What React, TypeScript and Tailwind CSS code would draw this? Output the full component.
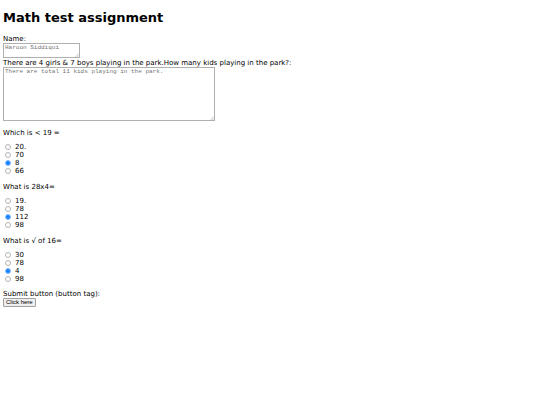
import { useState, type TextareaHTMLAttributes } from 'react';
import { clsx } from 'clsx';

interface Question {
  id: string;
  text: string;
  options: string[];
  answer: string;
}

const questions: Question[] = [
  { id: 'compare', text: 'Which is < 19 =', options: ['20.', '70', '8', '66'], answer: '8' },
  { id: 'multiply', text: 'What is 28x4=', options: ['19.', '78', '112', '98'], answer: '112' },
  { id: 'root', text: 'What is √ of 16=', options: ['30', '78', '4', '98'], answer: '4' },
];

function TextArea({ className, ...props }: TextareaHTMLAttributes<HTMLTextAreaElement>) {
  return (
    <div className="relative w-fit">
      <textarea
        className={clsx(
          "block resize-none border border-[#b0b0b0] bg-white px-px font-['Liberation_Mono',monospace] text-[6px] leading-[7px] placeholder:text-[#757575]",
          className,
        )}
        {...props}
      />
      <svg
        viewBox="0 0 4 4"
        className="pointer-events-none absolute right-px bottom-px h-[4px] w-[4px]"
        stroke="#999"
        strokeWidth="0.5"
        aria-hidden="true"
      >
        <path d="M0.5 4 4 0.5M2.3 4 4 2.3" />
      </svg>
    </div>
  );
}

function RadioQuestion({ question }: { question: Question }) {
  const [value, setValue] = useState(question.answer);

  return (
    <fieldset>
      <legend className="mb-[6px]">{question.text}</legend>
      {question.options.map((option) => (
        <label key={option} className="flex items-center gap-[4px]">
          <input
            type="radio"
            name={question.id}
            value={option}
            checked={value === option}
            onChange={() => setValue(option)}
            className="ml-[2px] h-[6px] w-[6px] appearance-none rounded-full border border-[#b4b4b4] bg-white checked:border-[#8abfff] checked:bg-[#1a80ff]"
          />
          {option}
        </label>
      ))}
    </fieldset>
  );
}

export default function App() {
  return (
    <main className="px-[3px] pt-[9px] font-['DejaVu_Sans',sans-serif] text-[7px] leading-[8px] text-black">
      <h1 className="mb-[9px] text-[13px] leading-[17px] font-bold">Math test assignment</h1>
      <form onSubmit={(e) => e.preventDefault()}>
        <label htmlFor="name" className="block">
          Name:
        </label>
        <TextArea id="name" placeholder="Haroon Siddiqui" className="h-[15px] w-[77px]" />
        <label htmlFor="kids" className="mt-px block">
          There are 4 girls & 7 boys playing in the park.How many kids playing in the park?:
        </label>
        <TextArea
          id="kids"
          placeholder="There are total 11 kids playing in the park."
          className="h-[54px] w-[212px]"
        />
        <div className="mt-[8px] mb-[7px] flex flex-col gap-[8px]">
          {questions.map((question) => (
            <RadioQuestion key={question.id} question={question} />
          ))}
        </div>
        <label htmlFor="submit" className="block">
          Submit button (button tag):
        </label>
        <button
          id="submit"
          type="submit"
          className="block rounded-[1px] border border-[#a0a0a0] bg-[#efefef] px-[2px] font-['Liberation_Sans',sans-serif] text-[6px] leading-[7px]"
        >
          Click here
        </button>
      </form>
    </main>
  );
}
